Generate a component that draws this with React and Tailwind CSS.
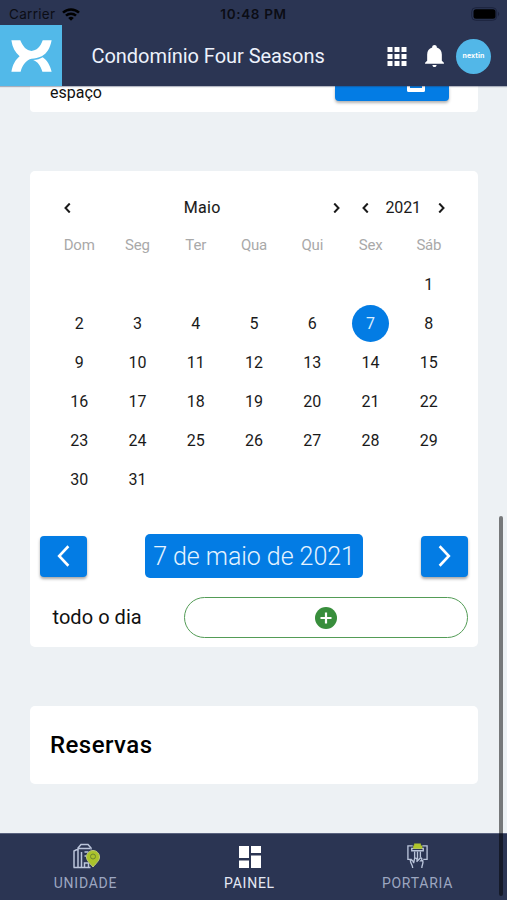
import React from "react";

const WEEKDAYS = ["Dom", "Seg", "Ter", "Qua", "Qui", "Sex", "Sáb"];
const DAYS = [...Array(6).fill(null), ...Array.from({ length: 31 }, (_, i) => i + 1)];

function Chevron({ right = false, className, width = 2 }) {
  return (
    <svg viewBox="0 0 12 20" className={className} fill="none" stroke="currentColor" strokeWidth={width}>
      <path d={right ? "M1.5 1 10 10 1.5 19" : "M10.5 1 2 10l8.500 9"} />
    </svg>
  );
}

function StatusBar() {
  return (
    <div className="flex h-[26px] items-center justify-between pt-[2px] pr-[9px] pl-[9px] font-[Inter] text-[#0b0d15]">
      <div className="flex w-[157px] items-center gap-[7px]">
        <span className="text-[13.5px] tracking-[0.3px]">Carrier</span>
        <svg viewBox="0 0 18 13" className="h-[13px] w-[18px]" fill="none" stroke="#000" strokeWidth="2.500">
          <path d="M1 4.700a11.500 11.500 0 0 1 16 0M4 7.700a7.200 7.200 0 0 1 10 0" />
          <path d="M9 12.800 6.200 10a4 4 0 0 1 5.600 0Z" fill="#000" stroke="none" />
        </svg>
      </div>
      <span className="text-[13.5px] font-semibold tracking-[0.65px] whitespace-nowrap">10:48 PM</span>
      <div className="flex w-[157px] justify-end">
        <svg viewBox="0 0 30 14" className="-mr-[3px] h-[14px] w-[30px]">
          <rect x="0.700" y="0.700" width="25" height="12.600" rx="4" fill="none" stroke="#1c233e" />
          <rect x="2.500" y="2.300" width="22" height="9.400" rx="2.500" fill="#000" />
          <path d="M27 4.800q2.500 2 0 4.400Z" fill="#1c233e" />
        </svg>
      </div>
    </div>
  );
}

function Header() {
  return (
    <header className="relative z-10 h-[86px] shrink-0 bg-[#2b3553] shadow-[0_1px_1px_rgba(43,53,83,0.35)]">
      <StatusBar />
      <div className="flex h-[60px] items-center">
        <div className="-mt-px flex h-[61px] w-[62px] items-center justify-center bg-[#52b9e9]">
          <svg viewBox="33 40 124 97" className="mt-px h-[32px] w-[41px]" fill="#fff">
            <path d="M34 41H61C69 60 80 73 95 73C110 73 122 61 129 41H156C151 66 142 81 126 89C115 94 106 95 95 97C80 100 68 115 62 136H34C38 114 46 100 59 89C45 78 37 62 34 41Z" />
            <path d="M100 101C112 100 121 97 129 92C142 101 151 115 156 136H128C122 118 114 106 100 101Z" />
          </svg>
        </div>
        <h1 className="ml-[29.5px] flex-1 text-[20px] tracking-[-0.05px] whitespace-nowrap text-[#edf2fc]">Condomínio Four Seasons</h1>
        <div className="mr-[16px] flex items-center">
          <svg viewBox="0 0 20 20" className="h-[20px] w-[20px]" fill="#fff">
            <path d="M.5 1h5v5h-5zM7.500 1h5v5h-5zM14.500 1h5v5h-5zM.5 8h5v5h-5zM7.500 8h5v5h-5zM14.500 8h5v5h-5zM.5 15h5v5h-5zM7.500 15h5v5h-5zM14.500 15h5v5h-5z" />
          </svg>
          <svg viewBox="3 2 18 21" className="mr-[12px] ml-[18px] h-[22px] w-[19px]" fill="#fff">
            <path d="M12 23c1.100 0 2-.9 2-2h-4c0 1.100.9 2 2 2Zm7-6v-6c0-3.300-1.700-5.900-4.800-6.600V3.800C14.200 2.800 13.200 2 12 2s-2.200.8-2.200 1.800v.6C6.700 5.100 5 7.700 5 11v6l-2 2v1h18v-1l-2-2Z" />
          </svg>
          <div className="flex h-[35px] w-[35px] items-center justify-center rounded-full bg-[#52b7e8] pt-px font-[Inter] text-[7px] font-bold tracking-[0.1px] text-white">
            nextin
          </div>
        </div>
      </div>
    </header>
  );
}

function Calendar() {
  return (
    <div className="px-[20px] pt-[18px] text-[#1a1a1a]">
      <div className="flex h-[39px] items-center text-[16px]">
        <Chevron className="ml-[14px] h-[10px] w-[7px]" width={4} />
        <span className="flex-1 text-center tracking-[0.3px] [-webkit-text-stroke:0.1px_#1a1a1a]">Maio</span>
        <Chevron right className="h-[10px] w-[7px]" width={4} />
        <Chevron className="ml-[22px] h-[10px] w-[7px]" width={4} />
        <span className="mr-[17px] ml-[16px] tracking-[-0.1px]">2021</span>
        <Chevron right className="mr-[13px] h-[10px] w-[7px]" width={4} />
      </div>
      <div className="grid grid-cols-7 text-center">
        {WEEKDAYS.map((d) => (
          <span key={d} className="flex h-[37.5px] items-center justify-center pb-[2px] text-[15px] tracking-[-0.2px] text-[#a9a9a9]">{d}</span>
        ))}
        {DAYS.map((d, i) => (
          <div key={i} className="flex h-[39px] items-center justify-center text-[16px]">
            {d && (
              <span className={d === 7 ? "flex h-[37px] w-[37px] items-center justify-center rounded-full bg-[#037ce4] text-[#d9edff]" : ""}>{d}</span>
            )}
          </div>
        ))}
      </div>
    </div>
  );
}

function Nav({ right = false }) {
  return (
    <button className="flex h-[41px] w-[47px] items-center justify-center rounded-[4px] bg-[#037ce4] text-white shadow-[0_2px_3px_rgba(0,0,0,0.35)]">
      <Chevron right={right} className="h-[22px] w-[13px]" width={2.4} />
    </button>
  );
}

function Tab({ label, className, children }) {
  return (
    <div className={"flex flex-col items-center pt-[10px] " + className}>
      <div className="flex h-[28px] items-center justify-center">{children}</div>
      <span className="mt-px text-[14px] leading-[20px] tracking-[0.75px]">{label}</span>
    </div>
  );
}

function Footer() {
  return (
    <footer className="z-10 flex h-[67px] shrink-0 border-t border-[#59627e] bg-[#2b3553] text-[#9da7c1]">
      <Tab label="UNIDADE" className="w-[171px]">
        <svg viewBox="0 0 28 26" className="-mt-[4px] h-[26px] w-[28px]" fill="none" stroke="#bac4da" strokeWidth="1.500">
          <path d="M2 24.500V8l4-2v18.500M6 8V5l3-3.500h7L19 5v1.500M6 5.500h12M9.500 9v15.500M12.500 9h4M12.500 13h2M1.500 24.500h17M12.500 24v-4h4v4" />
          <path d="M21 24C16.500 19 14.500 17 14.500 14a6.500 6.500 0 0 1 13 0c0 3-2 5-6.500 10Z" fill="#aac32b" stroke="#bfca79" strokeWidth="1" />
          <circle cx="21" cy="13.500" r="2.500" fill="#aac32b" stroke="#6f8531" strokeWidth="1" />
        </svg>
      </Tab>
      <Tab label="PAINEL" className="w-[157px] text-[#e5e9f4]">
        <svg viewBox="0 0 22 22" className="-mt-[2px] h-[22px] w-[22px]" fill="#fff">
          <path d="M0 0h10v12H0zM12 0h10v7H12zM0 14.500h10V22H0zM12 9.500h10V22H12z" />
        </svg>
      </Tab>
      <Tab label="PORTARIA" className="w-[179px]">
        <svg viewBox="0 0 24 27" className="-mt-[4px] h-[26px] w-[23px]" fill="none" stroke="#bac4da" strokeWidth="1.400">
          <path d="M7 3H2v14h4M17 3h5v14h-4M6 5.500h12v2.500H6zM9 9v7M12 9v8M15 9v6" />
          <path d="M7 26c0-3-2-4-2.500-8 2-1 3 1 3.500 3l1-5c2-1 3 1 2.500 3M11 19.500l4-4c2 0 2 1.500.5 3h2c1 3-1 4-1 7.500" />
          <path d="M8.500.5h7v2H17V6H7.500V2.500h1Z" fill="#b0c52c" stroke="none" />
        </svg>
      </Tab>
    </footer>
  );
}

export default function App() {
  return (
    <div className="relative flex h-[900px] w-[507px] flex-col overflow-hidden bg-[#edf1f4] font-[Roboto,sans-serif] text-[#111]">
      <Header />
      <main className="flex flex-1 flex-col px-[30px] pr-[29px]">
        <section className="flex h-[26px] justify-between rounded-b-[4px] bg-white pr-[29px] pl-[20px]">
          <span className="-mt-[3px] text-[16px] leading-[20px]">espaço</span>
          <div className="flex h-[15px] w-[114px] justify-end rounded-b-[4px] bg-[#037ce4] pr-[24px] shadow-[0_2px_3px_rgba(0,0,0,0.3)]">
            <span className="h-[6px] w-[18px] rounded-b-[2px] border-x-[3px] border-b-[4px] border-white" />
          </div>
        </section>

        <section className="mt-[58.5px] flex h-[476.5px] flex-col rounded-[5px] bg-white">
          <Calendar />
          <div className="mt-[35px] flex h-[44px] items-center justify-between px-[10px]">
            <Nav />
            <div className="flex h-[44px] w-[218px] items-center justify-center rounded-[5px] bg-[#037ce4] pt-[2px] text-[25px] font-light tracking-[-0.05px] whitespace-nowrap text-[#e5f3ff]">
              7 de maio de 2021
            </div>
            <Nav right />
          </div>
          <div className="mt-[19px] flex items-center pr-[10px] pl-[22.5px]">
            <span className="w-[131px] pb-px text-[20px] tracking-[0.05px]">todo o dia</span>
            <button className="flex h-[41px] flex-1 items-center justify-center rounded-full border border-[#539c56]">
              <svg viewBox="0 0 22 22" className="h-[22px] w-[22px]">
                <circle cx="11" cy="11" r="11" fill="#388e3c" />
                <path d="M11 5.500v11M5.500 11h11" stroke="#fff" strokeWidth="2.200" />
              </svg>
            </button>
          </div>
        </section>

        <section className="mt-[59px] flex h-[78px] items-center rounded-[5px] bg-white pl-[20px]">
          <h2 className="text-[24px] font-medium tracking-[0.45px] text-black">Reservas</h2>
        </section>
      </main>
      <Footer />
      <div className="absolute top-[516px] right-[4px] z-20 h-[380px] w-[4px] rounded-full bg-black/50" />
    </div>
  );
}
